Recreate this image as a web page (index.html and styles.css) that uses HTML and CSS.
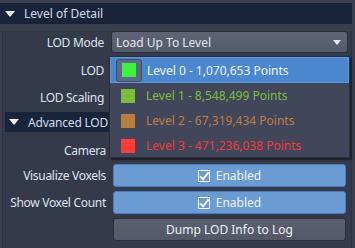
FILE: index.html
```html
<!DOCTYPE html>
<html lang="en">
<head>
<meta charset="UTF-8">
<meta name="viewport" content="width=device-width, initial-scale=1.0">
<title>Level of Detail</title>
<link rel="stylesheet" href="styles.css">
</head>
<body>

<div class="frame">
  <div class="frame-header">
    <span class="tri"></span>
    <span>Level of Detail</span>
  </div>

  <div class="frame-body">
    <div class="row row-mode">
      <div class="label">LOD Mode</div>
      <div class="combo">
        <span>Load Up To Level</span>
        <span class="arrow"></span>
      </div>
    </div>

    <div class="row row-lod">
      <div class="label">LOD</div>
      <div class="slot"></div>
    </div>

    <div class="row row-scaling">
      <div class="label">LOD Scaling</div>
      <div class="slot"></div>
    </div>

    <div class="sub">
      <div class="sub-header">
        <span class="tri"></span>
        <span>Advanced LOD</span>
      </div>

      <div class="row row-camera">
        <div class="label">Camera</div>
        <div class="slot"></div>
      </div>

      <div class="row row-btn">
        <div class="label">Visualize Voxels</div>
        <div class="btn btn-on"><span class="check"></span>Enabled</div>
      </div>

      <div class="row row-btn">
        <div class="label">Show Voxel Count</div>
        <div class="btn btn-on"><span class="check"></span>Enabled</div>
      </div>

      <div class="row row-btn">
        <div class="label"></div>
        <div class="btn btn-plain">Dump LOD Info to Log</div>
      </div>
    </div>
  </div>
</div>

<!-- open combo popup -->
<div class="popup">
  <div class="item selected">
    <span class="swatch-box"><span class="swatch" style="background:#3ef23e"></span></span>
    <span>Level 0 - 1,070,653 Points</span>
  </div>
  <div class="item lvl1">
    <span class="swatch-box"><span class="swatch" style="background:#7bbd3c"></span></span>
    <span>Level 1 - 8,548,499 Points</span>
  </div>
  <div class="item lvl2">
    <span class="swatch-box"><span class="swatch" style="background:#b97d3e"></span></span>
    <span>Level 2 - 67,319,434 Points</span>
  </div>
  <div class="item lvl3">
    <span class="swatch-box"><span class="swatch" style="background:#ff3b3b"></span></span>
    <span>Level 3 - 471,236,038 Points</span>
  </div>
</div>

</body>
</html>
```

FILE: styles.css
```css
body {
  margin: 0;
  width: 355px;
  height: 248px;
  overflow: hidden;
  position: relative;
  background-color: #3a3f50;
  font-family: "Noto Sans", "Open Sans", sans-serif;
  font-size: 12px;
  color: #dde4ee;
}
.frame {
  padding-top: 3px;
  width: 352px;
}
.frame-header {
  height: 21px;
  background-color: #17243a;
  display: flex;
  align-items: center;
  gap: 9px;
  padding-left: 5px;
  color: #d3deec;
}
.tri {
  width: 0;
  height: 0;
  border-left: 5px solid transparent;
  border-right: 5px solid transparent;
  border-top: 6px solid #f2f4f8;
}
.frame-body {
  background-color: #353a4a;
  border-left: 1px solid #2e3241;
  border-right: 1px solid #2e3241;
  border-bottom: 1px solid #2e3241;
  margin-left: 2px;
  height: 218px;
  padding-right: 3px;
}
.row {
  display: grid;
  grid-template-columns: 101px 1fr;
  column-gap: 7px;
  align-items: center;
  height: 22px;
}
.label {
  text-align: right;
  white-space: nowrap;
  letter-spacing: -0.3px;
}
.row-mode {
  margin-top: 7px;
}
.row-lod {
  margin-top: 6px;
}
.row-scaling {
  margin-top: 5px;
}
.combo {
  height: 20px;
  background: linear-gradient(#5f6474, #565b6b);
  border: 1px solid #2c303d;
  border-radius: 3px;
  display: flex;
  align-items: center;
  justify-content: space-between;
  padding: 0 6px 0 4px;
  color: #e2e8f0;
}
.arrow {
  width: 0;
  height: 0;
  border-left: 4px solid transparent;
  border-right: 4px solid transparent;
  border-top: 5px solid #e6eaf0;
}
.sub {
  padding-left: 2px;
  margin-top: 4px;
}
.sub-header {
  height: 20px;
  background-color: #17243a;
  display: flex;
  align-items: center;
  gap: 9px;
  padding-left: 4px;
  color: #d3deec;
  letter-spacing: -0.2px;
}
.row-camera {
  margin-top: 7px;
}
.row-btn {
  height: 23px;
  margin-top: 3px;
}
.row-btn + .row-btn {
  margin-top: 4px;
}
.row-camera + .row-btn {
  margin-top: 3px;
}
.btn {
  height: 21px;
  margin: 0 2px 0 0;
  border-radius: 3px;
  display: flex;
  align-items: center;
  justify-content: center;
  gap: 6px;
  color: #eef2f8;
}
.btn-on {
  background-color: #6b9bd3;
  border: 1px solid #4d7cbc;
}
.btn-plain {
  background: linear-gradient(#5c6070, #535767);
  border: 1px solid #2c303d;
}
.check {
  width: 10px;
  height: 10px;
  border: 1px solid #f4f7fb;
  position: relative;
}
.check::after {
  content: "";
  position: absolute;
  left: 3px;
  top: -1px;
  width: 3px;
  height: 8px;
  border-right: 2px solid #f4f7fb;
  border-bottom: 2px solid #f4f7fb;
  transform: rotate(40deg);
}
.popup {
  position: absolute;
  left: 109px;
  top: 56px;
  width: 239px;
  height: 100px;
  background-color: #41465a;
  border: 1px solid #2a2e3b;
  box-shadow: 2px 2px 1px rgba(20, 22, 30, 0.6);
}
.item {
  height: 25px;
  display: flex;
  align-items: center;
  padding-left: 5px;
  gap: 5px;
}
.selected {
  background-color: #4a87cf;
  border: 1px solid #5d97dc;
  height: 24px;
  color: #f0f5fb;
}
.swatch-box {
  width: 26px;
  height: 23px;
  display: flex;
  align-items: center;
  justify-content: center;
  border-radius: 3px;
}
.selected .swatch-box {
  background-color: #5a6b87;
  border: 1px solid #3f4d66;
  width: 24px;
  height: 21px;
}
.swatch {
  width: 14px;
  height: 14px;
}
.lvl1 {
  color: #7cbf3e;
}
.lvl2 {
  color: #bd7f42;
}
.lvl3 {
  color: #ee3d3d;
}
```
